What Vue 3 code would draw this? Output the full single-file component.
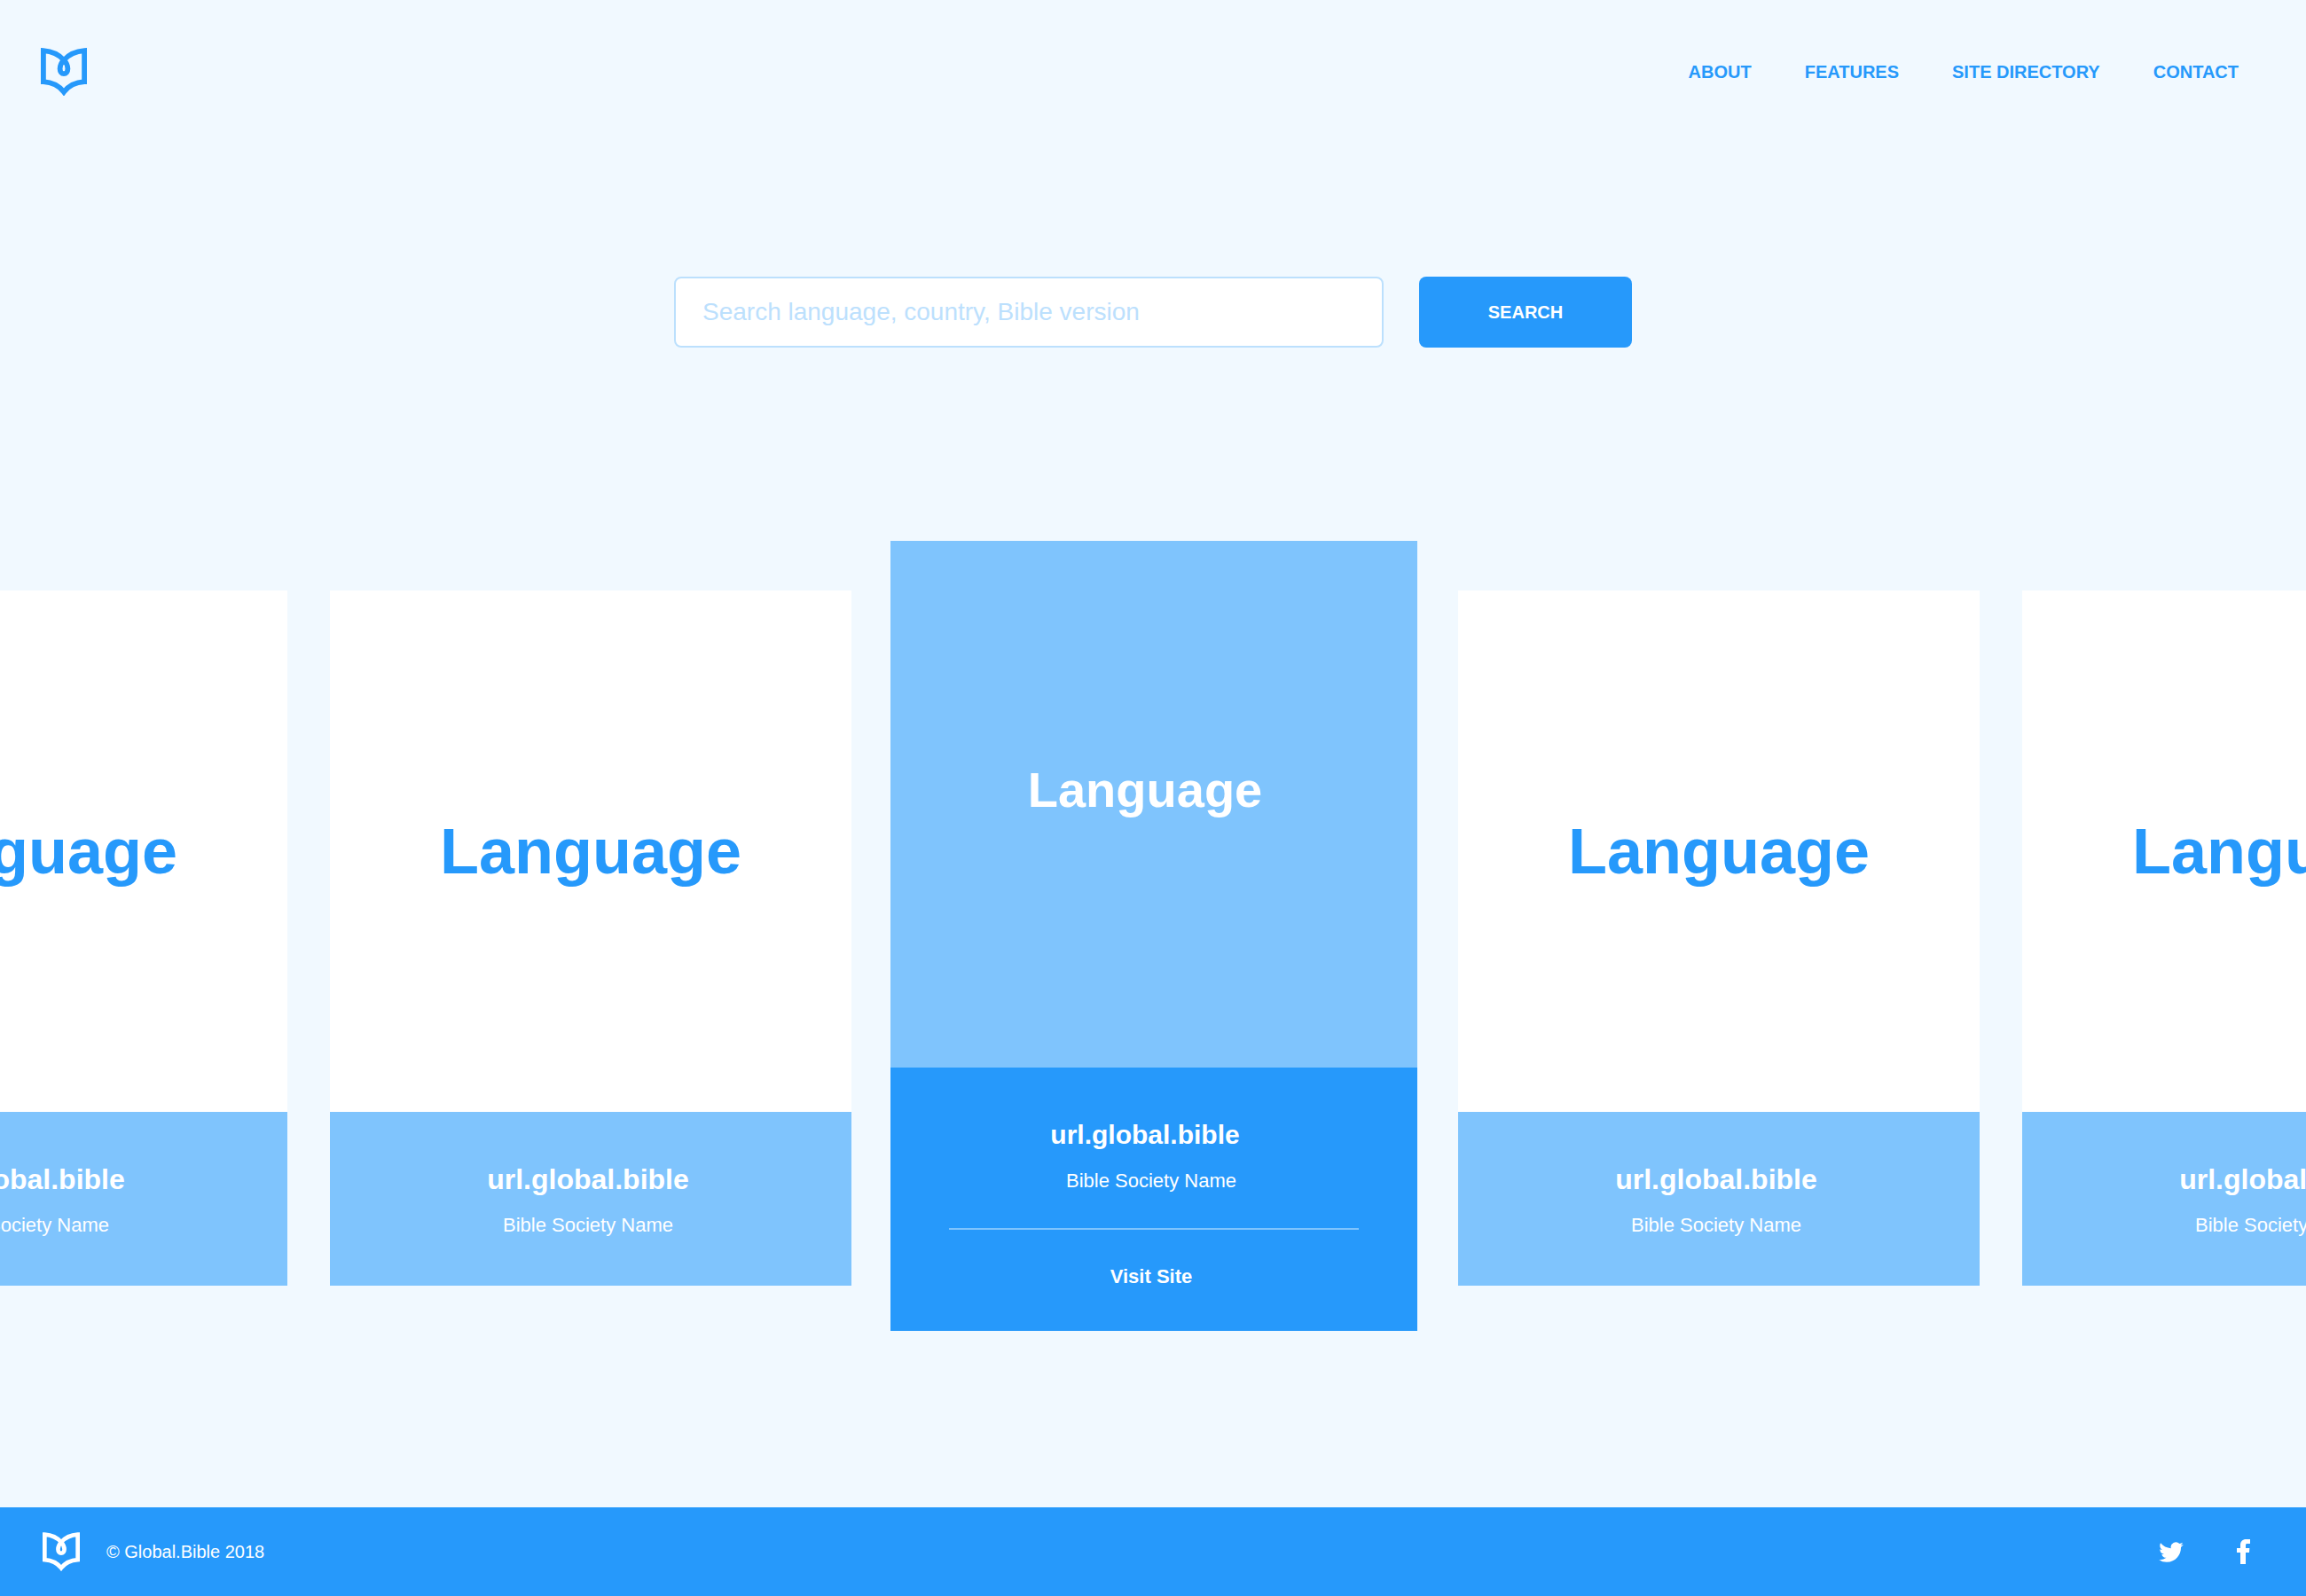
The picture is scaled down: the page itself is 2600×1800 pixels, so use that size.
<script setup>
import { ref } from 'vue'

const query = ref('')

const links = ['About', 'Features', 'Site Directory', 'Contact']

const sites = [1, 2, 3, 4, 5].map((id) => ({
  id,
  language: 'Language',
  url: 'url.global.bible',
  society: 'Bible Society Name',
  featured: id === 3,
}))

const logoPath =
  'M2.9 38.2V3.1C12 3.8 21 8 26 13.8C29.5 17.5 30.4 20.5 30.4 23.5C30.4 27 28.5 29.2 26 29.2C23.5 29.2 21.6 27 21.6 23.5C21.6 20.5 22.5 17.5 26 13.8C31 8 40 3.8 49.1 3.1V38.2C39 38.8 31 43.2 26 49.8C21 43.2 13 38.8 2.9 38.2Z'
</script>

<template>
  <div class="page">
    <header class="header">
      <a class="logo" href="#" aria-label="Global.Bible home">
        <svg viewBox="0 0 52 54" aria-hidden="true"><path :d="logoPath" /></svg>
      </a>
      <nav class="nav">
        <a v-for="link in links" :key="link" href="#">{{ link }}</a>
      </nav>
    </header>

    <main>
      <form class="search" role="search" @submit.prevent>
        <input
          v-model="query"
          class="search-input"
          type="text"
          aria-label="Search language, country, Bible version"
          placeholder="Search language, country, Bible version"
        />
        <button class="search-button" type="submit">SEARCH</button>
      </form>

      <section class="carousel" aria-label="Sites">
        <article
          v-for="site in sites"
          :key="site.id"
          class="card"
          :class="{ featured: site.featured }"
        >
          <div class="cover">
            <h2 class="language">{{ site.language }}</h2>
          </div>
          <div class="info">
            <h3 class="url">{{ site.url }}</h3>
            <p class="society">{{ site.society }}</p>
            <template v-if="site.featured">
              <hr class="divider" />
              <a class="visit" href="#">Visit Site</a>
            </template>
          </div>
        </article>
      </section>
    </main>

    <footer class="footer">
      <svg class="footer-logo" viewBox="0 0 52 54" aria-hidden="true"><path :d="logoPath" /></svg>
      <p class="copyright">© Global.Bible 2018</p>
      <div class="social">
        <a href="#" aria-label="Twitter">
          <svg class="twitter" viewBox="0 2 24 20" aria-hidden="true">
            <path
              d="M23.953 4.57a10 10 0 01-2.825.775 4.958 4.958 0 002.163-2.723c-.951.555-2.005.959-3.127 1.184a4.92 4.92 0 00-8.384 4.482C7.69 8.095 4.067 6.13 1.64 3.162a4.822 4.822 0 00-.666 2.475c0 1.71.87 3.213 2.188 4.096a4.904 4.904 0 01-2.228-.616v.06a4.923 4.923 0 003.946 4.827 4.996 4.996 0 01-2.212.085 4.936 4.936 0 004.604 3.417 9.867 9.867 0 01-6.102 2.105c-.39 0-.779-.023-1.17-.067a13.995 13.995 0 007.557 2.209c9.053 0 13.998-7.496 13.998-13.985 0-.21 0-.42-.015-.63A9.935 9.935 0 0024 4.59z"
            />
          </svg>
        </a>
        <a href="#" aria-label="Facebook">
          <svg class="facebook" viewBox="0 0 45 84" aria-hidden="true">
            <path d="M12 84V45H0V30H12V20C12 7 20 0 31 0H45V15H36C31 15 30 17 30 21V30H43L42 45H30V84Z" />
          </svg>
        </a>
      </div>
    </footer>
  </div>
</template>

<style>
body {
  margin: 0;
  background: #f1f9ff;
}
</style>

<style scoped>
.page {
  --blue: #2699fb;
  --sky: #7fc4fd;
  --pale: #bce0fd;
  display: flex;
  flex-direction: column;
  min-height: 100vh;
  overflow-x: hidden;
  background: #f1f9ff;
  color: #fff;
  font-family: "Liberation Sans", Arial, sans-serif;
}

a {
  color: inherit;
  text-decoration: none;
}

h2,
h3,
p {
  margin: 0;
}

svg {
  display: block;
}

.header {
  display: flex;
  align-items: center;
  justify-content: space-between;
  padding: 54px 76px 54px 46px;
  color: var(--blue);
}

.logo svg {
  width: 52px;
  height: 54px;
}

.logo path,
.footer-logo path {
  fill: none;
  stroke: currentColor;
  stroke-width: 5.8;
}

.nav {
  display: flex;
  gap: 60px;
  font-size: 20px;
  font-weight: 700;
  line-height: 24px;
  text-transform: uppercase;
}

.search {
  display: flex;
  justify-content: center;
  gap: 40px;
  padding: 150px 40px 218px;
}

.search-input {
  box-sizing: border-box;
  flex: 0 1 800px;
  min-width: 0;
  height: 80px;
  padding: 0 30px;
  border: 2px solid var(--pale);
  border-radius: 8px;
  background: #fff;
  color: var(--blue);
  font-family: inherit;
  font-size: 28px;
}

.search-input::placeholder {
  color: var(--pale);
  opacity: 1;
}

.search-button {
  width: 240px;
  height: 80px;
  padding: 0;
  border: 0;
  border-radius: 8px;
  background: var(--blue);
  color: #fff;
  font-family: inherit;
  font-size: 20px;
  font-weight: 700;
}

.carousel {
  display: flex;
  align-items: flex-start;
  justify-content: center;
  gap: 48px;
  padding-left: 4px;
  overflow: hidden;
}

.card {
  flex: none;
  width: 588px;
  margin-top: 56px;
  text-align: center;
}

.cover {
  display: flex;
  align-items: center;
  justify-content: center;
  aspect-ratio: 1;
  background: #fff;
  color: var(--blue);
}

.language {
  font-size: 72px;
  line-height: 84px;
}

.info {
  padding: 58px 6px 54px 0;
  background: var(--sky);
}

.url {
  font-size: 32px;
  line-height: 36px;
}

.society {
  margin-top: 20px;
  font-size: 22px;
  line-height: 28px;
}

.featured {
  width: 594px;
  margin: 0 -2px 0 -4px;
}

.featured .cover {
  box-sizing: border-box;
  padding-bottom: 32px;
  background: var(--sky);
  color: #fff;
}

.featured .language {
  font-size: 56px;
}

.featured .language,
.featured .url {
  padding-right: 20px;
}

.featured .info {
  padding: 58px 0 47px;
  background: var(--blue);
}

.featured .url {
  font-size: 30px;
}

.featured .society,
.visit {
  padding-right: 6px;
}

.divider {
  height: 2px;
  margin: 39px 66px;
  border: 0;
  background: var(--sky);
}

.visit {
  display: block;
  font-size: 22px;
  font-weight: 700;
  line-height: 28px;
}

.footer {
  display: flex;
  align-items: center;
  gap: 30px;
  height: 100px;
  margin-top: auto;
  padding: 0 63px 0 48px;
  background: var(--blue);
}

.footer-logo {
  width: 42px;
  height: 44px;
}

.copyright {
  font-size: 20px;
  line-height: 24px;
}

.social {
  display: flex;
  align-items: center;
  gap: 60px;
  margin-left: auto;
}

.social svg {
  fill: #fff;
}

.twitter {
  width: 28px;
  height: 23px;
}

.facebook {
  width: 15px;
  height: 28px;
}
</style>
